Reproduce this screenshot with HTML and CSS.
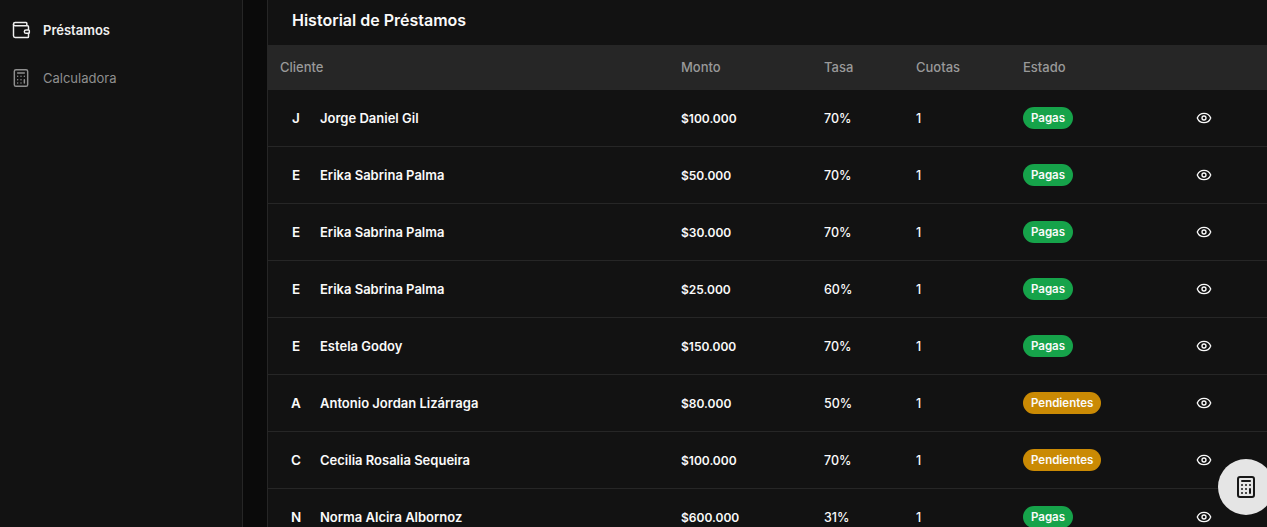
FILE: index.html
```html
<!DOCTYPE html>
<html lang="es">
<head>
    <meta charset="UTF-8">
    <meta name="viewport" content="width=device-width, initial-scale=1.0">
    <title>Historial de Préstamos</title>
    <link rel="stylesheet" href="styles.css">
</head>
<body>

<svg class="icon-defs" width="0" height="0">
    <symbol id="i-eye" viewBox="0 0 24 24">
        <path d="M2.06 12.35a1 1 0 0 1 0-.7 10.75 10.75 0 0 1 19.88 0 1 1 0 0 1 0 .7 10.75 10.75 0 0 1-19.88 0"/>
        <circle cx="12" cy="12" r="3"/>
    </symbol>
    <symbol id="i-calc" viewBox="0 0 24 24">
        <rect x="4" y="2" width="16" height="20" rx="2"/>
        <path d="M8 6h8M8 10h.01M12 10h.01M16 10h.01M8 14h.01M12 14h.01M16 14v4M8 18h.01M12 18h.01"/>
    </symbol>
</svg>

<div class="layout">
    <aside class="sidebar">
        <nav class="nav">
            <a class="nav-item active">
                <svg class="nav-icon" viewBox="0 0 24 24">
                    <path d="M19 7V4a1 1 0 0 0-1-1H5a2 2 0 0 0 0 4h15a1 1 0 0 1 1 1v4h-3a2 2 0 0 0 0 4h3a1 1 0 0 0 1-1v-2a1 1 0 0 0-1-1"/>
                    <path d="M3 5v14a2 2 0 0 0 2 2h15a1 1 0 0 0 1-1v-4"/>
                </svg>
                Préstamos
            </a>
            <a class="nav-item">
                <svg class="nav-icon"><use href="#i-calc"/></svg>
                Calculadora
            </a>
        </nav>
    </aside>

    <main class="panel">
        <h1 class="panel-title">Historial de Préstamos</h1>
        <table class="loans">
            <thead>
                <tr>
                    <th class="col-client">Cliente</th>
                    <th class="col-amount">Monto</th>
                    <th class="col-rate">Tasa</th>
                    <th class="col-fees">Cuotas</th>
                    <th class="col-state">Estado</th>
                    <th></th>
                </tr>
            </thead>
            <tbody>
                <tr>
                    <td><div class="client"><span class="initial">J</span>Jorge Daniel Gil</div></td>
                    <td class="amount">$100.000</td><td>70%</td><td>1</td>
                    <td><span class="badge paid">Pagas</span></td>
                    <td><svg class="eye"><use href="#i-eye"/></svg></td>
                </tr>
                <tr>
                    <td><div class="client"><span class="initial">E</span>Erika Sabrina Palma</div></td>
                    <td class="amount">$50.000</td><td>70%</td><td>1</td>
                    <td><span class="badge paid">Pagas</span></td>
                    <td><svg class="eye"><use href="#i-eye"/></svg></td>
                </tr>
                <tr>
                    <td><div class="client"><span class="initial">E</span>Erika Sabrina Palma</div></td>
                    <td class="amount">$30.000</td><td>70%</td><td>1</td>
                    <td><span class="badge paid">Pagas</span></td>
                    <td><svg class="eye"><use href="#i-eye"/></svg></td>
                </tr>
                <tr>
                    <td><div class="client"><span class="initial">E</span>Erika Sabrina Palma</div></td>
                    <td class="amount">$25.000</td><td>60%</td><td>1</td>
                    <td><span class="badge paid">Pagas</span></td>
                    <td><svg class="eye"><use href="#i-eye"/></svg></td>
                </tr>
                <tr>
                    <td><div class="client"><span class="initial">E</span>Estela Godoy</div></td>
                    <td class="amount">$150.000</td><td>70%</td><td>1</td>
                    <td><span class="badge paid">Pagas</span></td>
                    <td><svg class="eye"><use href="#i-eye"/></svg></td>
                </tr>
                <tr>
                    <td><div class="client"><span class="initial">A</span>Antonio Jordan Lizárraga</div></td>
                    <td class="amount">$80.000</td><td>50%</td><td>1</td>
                    <td><span class="badge pending">Pendientes</span></td>
                    <td><svg class="eye"><use href="#i-eye"/></svg></td>
                </tr>
                <tr>
                    <td><div class="client"><span class="initial">C</span>Cecilia Rosalia Sequeira</div></td>
                    <td class="amount">$100.000</td><td>70%</td><td>1</td>
                    <td><span class="badge pending">Pendientes</span></td>
                    <td><svg class="eye"><use href="#i-eye"/></svg></td>
                </tr>
                <tr>
                    <td><div class="client"><span class="initial">N</span>Norma Alcira Albornoz</div></td>
                    <td class="amount">$600.000</td><td>31%</td><td>1</td>
                    <td><span class="badge paid">Pagas</span></td>
                    <td><svg class="eye"><use href="#i-eye"/></svg></td>
                </tr>
            </tbody>
        </table>
    </main>
</div>

<button class="fab"><svg class="fab-icon"><use href="#i-calc"/></svg></button>

</body>
</html>
```

FILE: styles.css
```css
html, body {
    height: 100%;
    margin: 0;
    overflow: hidden;
}
body {
    background-color: #0a0a0a;
    color: #fafafa;
    font-family: Inter, "Noto Sans", sans-serif;
    font-size: 13px;
}
.icon-defs {
    position: absolute;
}
svg {
    fill: none;
    stroke: currentColor;
    stroke-width: 2;
    stroke-linecap: round;
    stroke-linejoin: round;
}
.layout {
    display: flex;
    height: 100%;
}
.sidebar {
    width: 242px;
    flex: none;
    background-color: #121212;
    border-right: 1px solid #262626;
}
.nav {
    padding-top: 6px;
}
.nav-item {
    display: flex;
    align-items: center;
    gap: 12px;
    height: 48px;
    padding-left: 11px;
    color: #8f8f8f;
}
.nav-item.active {
    color: #f0f0f0;
    font-weight: 600;
}
.nav-icon {
    width: 20px;
    height: 20px;
    flex: none;
    stroke-width: 1.75;
}
.panel {
    flex: 1;
    margin-left: 24px;
    background-color: #121212;
    border-left: 1px solid #262626;
}
.panel-title {
    margin: 0;
    height: 45px;
    padding: 0 0 5px 24px;
    box-sizing: border-box;
    display: flex;
    align-items: center;
    font-size: 16px;
    font-weight: 600;
}
.loans {
    width: 100%;
    table-layout: fixed;
    border-collapse: collapse;
}
.loans th {
    box-sizing: border-box;
    height: 45px;
    padding: 0 0 1px 12px;
    background-color: #262626;
    color: #999;
    font-weight: 500;
    text-align: left;
}
.col-client { width: 401px; }
.col-amount { width: 143px; }
.col-rate { width: 92px; }
.col-fees { width: 107px; }
.col-state { width: 173px; }
.loans td {
    height: 56px;
    padding: 0 0 0 12px;
    border-bottom: 1px solid #262626;
    font-weight: 500;
    font-size: 12.5px;
}
.client {
    display: flex;
    align-items: center;
    padding-left: 12px;
    font-size: 13px;
    font-weight: 600;
}
.initial {
    width: 8px;
    margin-right: 20px;
    display: flex;
    justify-content: center;
    font-size: 13.5px;
}
.loans .amount {
    font-size: 12px;
    font-weight: 600;
}
.badge {
    display: inline-block;
    padding: 0 8px;
    height: 22px;
    line-height: 22px;
    border-radius: 11px;
    font-size: 11.5px;
    font-weight: 600;
    vertical-align: middle;
}
.paid { background-color: #16a34a; }
.pending { background-color: #ca8a04; }
.eye {
    display: block;
    width: 16px;
    height: 16px;
}
.fab {
    position: fixed;
    left: 1218px;
    top: 459px;
    width: 56px;
    height: 56px;
    padding: 0;
    border: none;
    border-radius: 50%;
    background-color: #e5e5e5;
    color: #171717;
}
.fab-icon {
    display: block;
    width: 24px;
    height: 24px;
    margin-left: 16px;
}
```
